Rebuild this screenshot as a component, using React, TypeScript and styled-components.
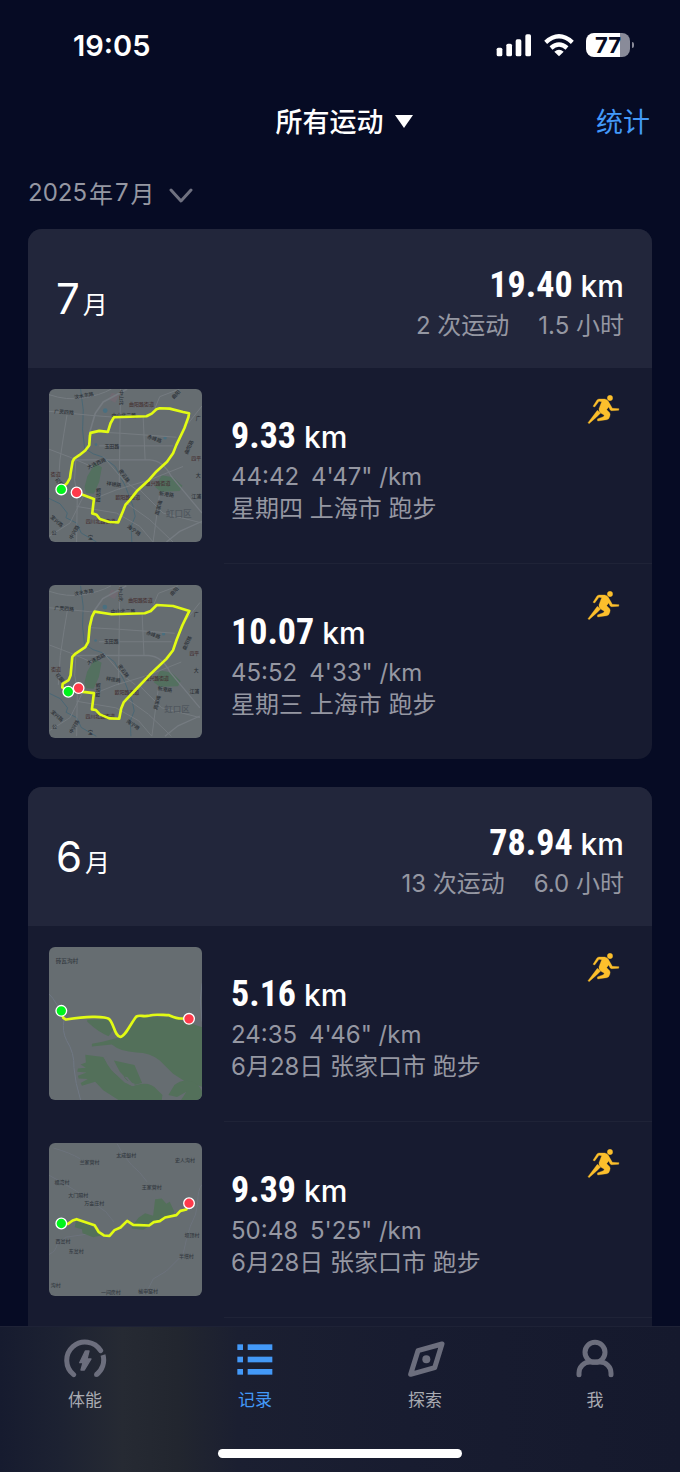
import React from 'react';
import styled, { createGlobalStyle } from 'styled-components';

const color = {
  page: '#060b24',
  header: '#22263b',
  card: '#171b30',
  line: '#1f2337',
  muted: '#9597a2',
  icon: '#6c6e7d',
  blue: '#4399f8',
  amber: '#fcbf2c',
  track: '#e2fb14',
};

const GlobalStyle = createGlobalStyle`
  * { box-sizing: border-box; }
  body {
    margin: 0;
    background: ${color.page};
    color: #fff;
    font-family: Inter, 'Noto Sans CJK SC', sans-serif;
  }
  h1, h2, p, ul { margin: 0; padding: 0; font-weight: 400; }
  ul { list-style: none; }
  button { border: 0; padding: 0; background: none; color: inherit; font: inherit; cursor: pointer; }
  svg { display: block; }
`;

const Screen = styled.div`
  display: flex;
  flex-direction: column;
  height: 100vh;
`;

/* ---------- status bar ---------- */

const StatusBar = styled.div`
  display: flex;
  align-items: center;
  justify-content: space-between;
  height: 90px;
  padding: 0 50px 0 73px;
`;

const Clock = styled.time`
  font-size: 29px;
  font-weight: 600;
`;

const StatusIcons = styled.div`
  display: flex;
  align-items: center;
  gap: 12px;
`;

const Battery = styled.span`
  position: relative;
  width: 44px;
  height: 24px;
  border-radius: 8px;
  background: linear-gradient(to right, #fff 77%, #898b99 77%);
  color: ${color.page};
  font-size: 22px;
  font-weight: 700;
  line-height: 24px;
  text-align: center;

  &::after {
    content: '';
    position: absolute;
    left: 46px;
    top: 9px;
    width: 2px;
    height: 6px;
    border-radius: 0 2px 2px 0;
    background: #898b99;
  }
`;

/* ---------- top navigation ---------- */

const NavBar = styled.header`
  display: grid;
  grid-template-columns: 1fr auto 1fr;
  align-items: center;
  height: 60px;
  padding: 0 30px 0 38px;
`;

const SportFilter = styled.button`
  grid-column: 2;
  display: flex;
  align-items: center;
  gap: 11px;
  font-size: 27px;
  font-weight: 500;

  svg { margin-top: 2px; }
`;

const StatsLink = styled.a`
  justify-self: end;
  color: ${color.blue};
  font-size: 27px;
  text-decoration: none;
`;

const MonthPicker = styled.button`
  display: flex;
  align-items: center;
  align-self: flex-start;
  gap: 2px;
  height: 79px;
  padding: 6px 28px 0;
  color: ${color.muted};
  font-size: 24px;

  svg { margin: 6px 0 0 12px; }
`;

/* ---------- month cards ---------- */

const Feed = styled.main`
  display: flex;
  flex: 1;
  flex-direction: column;
  gap: 28px;
  min-height: 0;
  padding: 0 28px;
  overflow-y: auto;
  scrollbar-width: none;
`;

const MonthCard = styled.section<{ $continues?: boolean }>`
  flex: ${p => (p.$continues ? '1 0 auto' : '0 0 auto')};
  border-radius: ${p => (p.$continues ? '14px 14px 0 0' : '14px')};
  background: ${color.card};
  overflow: hidden;
`;

const MonthHeader = styled.header`
  display: flex;
  align-items: center;
  justify-content: space-between;
  height: 139px;
  padding: 0 28px;
  background: ${color.header};
`;

const MonthName = styled.h2`
  font-size: 25px;
`;

const MonthNumber = styled.span`
  margin-right: 3px;
  font-size: 42px;
`;

const MonthTotals = styled.div`
  padding-top: 6px;
  text-align: right;
`;

const Distance = styled.p`
  font-size: 30px;
  font-weight: 500;
  line-height: 48px;
`;

const DistanceValue = styled.strong`
  font-family: 'Roboto Condensed', 'Liberation Sans Narrow', Roboto, sans-serif;
  font-size: 36px;
  font-weight: 700;
`;

const Meta = styled.p<{ $gap: number }>`
  display: flex;
  gap: ${p => p.$gap}px;
  color: ${color.muted};
  font-size: 24px;
  line-height: 32px;
`;

const TotalsMeta = styled(Meta)`
  justify-content: flex-end;
`;

const Workout = styled.li`
  display: flex;
  align-items: center;
  gap: 29px;
  padding: 21px 32px 21px 21px;
`;

const WorkoutDivider = styled.li`
  height: 1px;
  margin-left: 196px;
  background: ${color.line};
`;

const Thumb = styled.div`
  flex: none;
  width: 153px;
  height: 153px;
  border-radius: 6px;
  background: #666d71;
  overflow: hidden;

  svg { width: 100%; height: 100%; }
`;

const WorkoutText = styled.div`
  flex: 1;
  padding-top: 5px;
`;

const SportIcon = styled.div`
  align-self: flex-start;
  margin-top: 5px;
`;

/* ---------- tab bar ---------- */

const TabBar = styled.nav`
  display: grid;
  grid-template-columns: repeat(4, 1fr);
  border-top: 1px solid #1e2236;
  background: linear-gradient(to right, #161b2f 0%, #1d2232 9%, #262a33 18%, #22262f 26%, #1b1f31 35%, #181c30 60%, #15192d 100%);
`;

const Tab = styled.button<{ $active?: boolean }>`
  display: flex;
  flex-direction: column;
  align-items: center;
  gap: 9px;
  padding-top: 11px;
  color: ${p => (p.$active ? color.blue : '#a9abb2')};
  font-size: 17px;
  line-height: 26px;

  svg { color: ${p => (p.$active ? color.blue : color.icon)}; }
`;

const HomeIndicator = styled.div`
  grid-column: 1 / -1;
  justify-self: center;
  width: 36%;
  height: 9px;
  margin: 36px 0 14px;
  border-radius: 5px;
  background: #fff;
`;

/* ---------- icons ---------- */

const SignalIcon = () => (
  <svg width="36" height="24" viewBox="80 38 108 72" fill="#fff" aria-hidden="true">
    <rect x="82" y="82" width="17" height="26" rx="5" />
    <rect x="111" y="70" width="17" height="38" rx="5" />
    <rect x="139" y="57" width="17" height="51" rx="5" />
    <rect x="168" y="42" width="17" height="66" rx="5" />
  </svg>
);

const WifiIcon = () => (
  <svg width="30" height="24" viewBox="221 38 90 72" fill="none" stroke="#fff" strokeWidth="13" aria-hidden="true">
    <path d="M226 66 Q266 30 306 66" />
    <path d="M242 83 Q266 62 290 83" />
    <path d="M266 108 L252 94 Q266 83 280 94 Z" fill="#fff" stroke="none" />
  </svg>
);

const RunnerIcon = () => (
  <svg width="33" height="31" viewBox="51 42 99 93" fill={color.amber} stroke={color.amber} strokeWidth="1" strokeLinejoin="round" role="img" aria-label="跑步">
    <circle cx="120" cy="54" r="8" />
    <path d="M69 79 L81 60 Q84 57 88 57 L104 57 Q111 58 115 64 L127 85 L147 86 L146 91 L125 92 Q122 92 120 89 L116 81 L110 89 L119 98 Q122 103 119 110 Q117 118 110 119 L83 123 L82 117 L100 110 L103 106 L92 99 Q85 94 87 86 L95 65 L87 64 L74 81 Z" />
    <path d="M82 91 L92 99 L80 111 L57 131 L54 128 L73 103 Z" />
  </svg>
);

const FitnessIcon = () => (
  <svg width="44" height="40" viewBox="189 87 132 120" fill="none" stroke="currentColor" strokeWidth="15" aria-hidden="true">
    <path d="M221 197 A55 55 0 1 1 302 125" strokeLinecap="round" />
    <path d="M309 138 A55 55 0 0 1 289 197" />
    <circle cx="289" cy="197" r="7" fill="currentColor" stroke="none" />
    <path d="M256 126 L267 126 L261 150 L273 150 L253 183 L243 183 L249 161 L239 161 Z" fill="currentColor" strokeWidth="4" strokeLinejoin="round" />
  </svg>
);

const RecordsIcon = () => (
  <svg width="44" height="40" viewBox="699 87 132 120" fill="currentColor" aria-hidden="true">
    {[106, 143, 180].map(y => (
      <g key={y}>
        <rect x="712" y={y} width="17" height="17" />
        <rect x="743" y={y} width="74" height="17" />
      </g>
    ))}
  </svg>
);

const ExploreIcon = () => (
  <svg width="44" height="40" viewBox="189 87 132 120" fill="none" stroke="currentColor" strokeWidth="15" strokeLinejoin="round" aria-hidden="true">
    <path d="M306 105 L234 125 L212 196 L284 176 Z" />
    <circle cx="259" cy="151" r="12" fill="currentColor" stroke="none" />
  </svg>
);

const MeIcon = () => (
  <svg width="44" height="40" viewBox="699 87 132 120" fill="none" stroke="currentColor" strokeWidth="15" strokeLinecap="round" aria-hidden="true">
    <circle cx="765" cy="130" r="30" />
    <path d="M717 197 V192 A33 33 0 0 1 750 159 H780 A33 33 0 0 1 813 192 V197" />
  </svg>
);

/* ---------- route maps ---------- */

type Point = [number, number];

const MapLabel = ({ x, y, r = 0, size = 15, fill = '#2b3036', children }: { x: number; y: number; r?: number; size?: number; fill?: string; children: string }) => (
  <text x={x} y={y + 5} fontSize={size} fontWeight={500} fill={fill} textAnchor="middle" transform={`rotate(${r} ${x} ${y})`}>
    {children}
  </text>
);

const Route = ({ d, start, end }: { d: string; start: Point; end: Point }) => (
  <g>
    <path d={d} fill="none" stroke={color.track} strokeWidth="8" strokeLinejoin="round" strokeLinecap="round" />
    <circle cx={start[0]} cy={start[1]} r="16" fill="#00f41c" stroke="#fff" strokeWidth="4" />
    <circle cx={end[0]} cy={end[1]} r="16" fill="#ff3a4b" stroke="#fff" strokeWidth="4" />
  </g>
);

const CityStreets = () => (
  <g>
    <path d="M165 250 L186 262 L178 306 L162 342 L138 340 L134 322 L142 290 Z" fill="#53705f" />
    <path d="M366 286 L400 292 L428 318 L420 334 L364 336 L346 322 Z" fill="#53705f" />
    <path d="M216 38 L238 46 L226 68 L206 58 Z" fill="#706a72" />
    <g fill="none" stroke="#496775" strokeWidth="3">
      <path d="M122 27 L130 90 L128 150 L134 205 L160 222 L190 232 L226 260 L256 318 L280 380 L286 410 L274 440 L276 487" />
      <path d="M27 356 L60 372 L82 400 L78 414 L110 430 L124 460 L170 487" />
    </g>
    <g fill="#496f80">
      <circle cx="196" cy="92" r="7" />
      <circle cx="168" cy="194" r="4" />
      <circle cx="376" cy="174" r="5" />
    </g>
    <g fill="none" stroke="#757b81" strokeWidth="3">
      <path d="M27 44 Q80 62 130 54 T215 27" />
      <path d="M262 27 L190 66 L166 100 L148 162" strokeWidth="5" />
      <path d="M27 94 L150 106 L226 112" />
      <path d="M82 100 L72 160 L60 240 L54 330" />
      <path d="M242 27 L238 330" />
      <path d="M27 208 L90 232 L160 262" />
      <path d="M108 234 L104 300 L112 350 L110 487" />
      <path d="M98 240 H330 Q370 242 395 290 L487 400" strokeWidth="4" />
      <path d="M152 155 L242 160 L410 172" />
      <path d="M178 198 H400" />
      <path d="M310 108 L316 240" />
      <path d="M345 86 L360 50 L420 27" />
      <path d="M487 78 L446 130" />
      <path d="M160 358 L230 330 L330 300 L430 260" />
      <path d="M110 380 L230 400 L300 440 L340 487" />
      <path d="M27 470 L90 430 L130 350" />
      <path d="M260 370 L330 420 L400 487" />
      <path d="M300 330 L370 400 L487 430" />
      <path d="M380 487 L420 455 L487 425" strokeWidth="4" />
      <path d="M190 230 L250 300 L290 330" />
      <path d="M360 340 L340 487" />
    </g>
    <MapLabel x={132} y={47} r={-10}>汶水东路</MapLabel>
    <MapLabel x={72} y={97} r={4}>广灵四路</MapLabel>
    <MapLabel x={244} y={53} r={88}>中山北</MapLabel>
    <MapLabel x={305} y={72} fill="#463436">曲阳路街道</MapLabel>
    <MapLabel x={409} y={44} r={-45}>曲阳</MapLabel>
    <MapLabel x={252} y={106}>中山北二路</MapLabel>
    <MapLabel x={344} y={177} r={20}>赤峰路</MapLabel>
    <MapLabel x={216} y={198}>玉田路</MapLabel>
    <MapLabel x={448} y={202} r={-65}>曲阳路</MapLabel>
    <MapLabel x={476} y={115}>广</MapLabel>
    <MapLabel x={170} y={251} r={-25}>大连西路</MapLabel>
    <MapLabel x={253} y={288} r={55}>密云路</MapLabel>
    <MapLabel x={222} y={314} r={8}>祥德路</MapLabel>
    <MapLabel x={176} y={346} r={-88}>四达路</MapLabel>
    <MapLabel x={470} y={235} fill="#463436">四平</MapLabel>
    <MapLabel x={47} y={283} fill="#463436">街道</MapLabel>
    <MapLabel x={58} y={308} r={50}>花园</MapLabel>
    <MapLabel x={355} y={311} fill="#463436">嘉兴路街道</MapLabel>
    <MapLabel x={380} y={344} r={8}>新港路</MapLabel>
    <MapLabel x={264} y={354} fill="#463436">欧阳路街道</MapLabel>
    <MapLabel x={470} y={351}>江浦</MapLabel>
    <MapLabel x={476} y={286}>大</MapLabel>
    <MapLabel x={357} y={384} r={-75}>周家嘴</MapLabel>
    <MapLabel x={417} y={408} size={26} fill="#50575e">虹口区</MapLabel>
    <MapLabel x={182} y={425} fill="#463436">四川北路街道</MapLabel>
    <MapLabel x={50} y={425} r={42}>宝兴路</MapLabel>
    <MapLabel x={282} y={452} r={35}>海宁路</MapLabel>
    <MapLabel x={103} y={458} r={-60}>中兴路</MapLabel>
    <MapLabel x={42} y={458}>公</MapLabel>
    <MapLabel x={152} y={474}>宝</MapLabel>
  </g>
);

const ThursdayMap = () => (
  <svg viewBox="27 27 460 460" role="img" aria-label="路线">
    <CityStreets />
    <Route
      d="M64 328 L82 309 L90 295 L92 280 L98 245 L103 236 L118 226 L136 212 L148 196 L150 168 L152 159 L178 153 L204 156 L212 130 L222 112 L320 109 L336 101 L350 88 L360 85 L390 86 L430 96 L448 100 L446 112 L434 145 L410 195 L400 220 L382 246 L350 275 L325 303 L293 332 L270 361 L257 375 L249 395 L235 428 L208 427 L180 418 L170 405 L157 401 L162 358 L110 338"
      start={[64, 329]}
      end={[110, 338]}
    />
  </svg>
);

const WednesdayMap = () => (
  <svg viewBox="27 24 460 460" role="img" aria-label="路线">
    <g transform="translate(2 0) scale(.983)">
      <CityStreets />
    </g>
    <Route
      d="M86 345 L67 332 L68 321 L86 310 L92 295 L97 240 L107 230 L136 211 L145 195 L149 150 L156 120 L164 104 L215 112 L315 109 L333 102 L351 84 L400 87 L449 102 L428 145 L411 188 L400 220 L380 246 L330 294 L293 333 L252 376 L244 395 L238 426 L208 425 L180 413 L168 400 L156 398 L162 349 L116 344 L116 335"
      start={[85, 345]}
      end={[116, 334]}
    />
  </svg>
);

const ValleyMap = () => (
  <svg viewBox="27 21 460 460" role="img" aria-label="路线">
    <path d="M27 162 Q50 184 72 240 Q66 275 80 302 Q104 340 102 384 Q106 430 122 481 M487 130 L482 180 L487 245" fill="none" stroke="#6f7784" strokeWidth="3" />
    <g fill="#53705a">
      <path d="M142 240 L206 238 L222 268 L206 289 Q176 278 142 246 Z" />
      <path d="M240 292 L262 270 L290 232 L400 232 L487 262 V441 L440 428 L400 402 L360 362 Q330 338 290 338 Q240 335 216 314 L156 320 V312 L188 306 Z" />
      <path d="M136 345 L190 352 L220 396 L256 430 L266 424 L240 396 L222 362 L284 376 L307 430 L282 436 L262 412 L250 410 L276 440 L290 436 Q330 424 352 450 L368 466 L366 481 H236 L190 452 L166 426 L126 438 L122 430 L144 418 L116 416 L114 408 L140 398 L112 396 L114 386 L138 384 L122 374 L138 368 Z" />
      <path d="M386 466 L404 436 Q424 420 446 424 Q476 428 487 454 V481 H424 L440 456 L412 472 Z" />
    </g>
    <path d="M196 352 Q214 396 246 410 Q256 430 284 436" fill="none" stroke="#666d71" strokeWidth="8" />
    <MapLabel x={81} y={64} size={17} fill="#343a41">砖瓦沟村</MapLabel>
    <Route
      d="M64 213 L70 234 L78 239 Q130 230 165 231 Q200 232 207 237 C222 248 224 290 241 291 C256 292 276 244 290 230 C300 224 310 232 330 227 C345 222 370 226 388 226 C402 232 410 236 424 236 L448 237"
      start={[64, 213]}
      end={[448, 237]}
    />
  </svg>
);

const villages: [number, number, string][] = [
  [149, 82, '兰家营村'], [259, 62, '太成魁村'], [436, 76, '史人沟村'], [336, 158, '王家营村'],
  [66, 144, '福湾村'], [115, 181, '大门隔村'], [163, 206, '万金庄村'], [69, 322, '西岔村'],
  [109, 350, '东岔村'], [457, 302, '坝顶村'], [440, 366, '半塔村'], [47, 452, '沟村'],
  [213, 473, '一间房村'], [325, 470, '榆申窑村'],
];

const VillagesMap = () => (
  <svg viewBox="27 25 460 460" role="img" aria-label="路线">
    <path d="M40 40 Q90 54 120 72 M232 27 Q246 60 276 92 Q300 110 322 142 M27 122 L60 140 L110 170 L160 205 L198 232 L222 262 M27 360 Q50 350 52 326 L78 308 L150 298 M487 150 Q474 165 474 205 Q472 240 452 275 Q440 310 430 360 L380 410 L340 434 L326 462" fill="none" stroke="#6f7682" strokeWidth="2" />
    <g fill="#53705a">
      <path d="M108 260 L150 270 L186 302 L160 308 L128 296 L126 284 L104 278 Z" />
      <path d="M276 276 L296 250 L316 236 L340 244 L346 194 L366 192 L380 208 L390 202 L404 232 L396 246 L340 268 L310 286 L276 282 Z" />
    </g>
    {villages.map(([x, y, name]) => (
      <MapLabel key={name} x={x} y={y} fill="#343a41">{name}</MapLabel>
    ))}
    <Route
      d="M64 267 L84 268 L98 258 L110 254 L164 272 L176 292 L192 303 L209 304 L224 287 L242 279 L262 259 L280 271 L328 273 L342 263 L360 260 L376 249 L410 242 L422 229 L440 225 L448 206"
      start={[64, 267]}
      end={[448, 206]}
    />
  </svg>
);

/* ---------- data ---------- */

type WorkoutData = { km: string; time: string; pace: string; note: string; Map: () => React.JSX.Element };
type MonthData = { month: number; km: string; count: number; hours: string; continues?: boolean; workouts: WorkoutData[] };

const months: MonthData[] = [
  {
    month: 7, km: '19.40', count: 2, hours: '1.5',
    workouts: [
      { km: '9.33', time: '44:42', pace: `4'47" /km`, note: '星期四 上海市 跑步', Map: ThursdayMap },
      { km: '10.07', time: '45:52', pace: `4'33" /km`, note: '星期三 上海市 跑步', Map: WednesdayMap },
    ],
  },
  {
    month: 6, km: '78.94', count: 13, hours: '6.0', continues: true,
    workouts: [
      { km: '5.16', time: '24:35', pace: `4'46" /km`, note: '6月28日 张家口市 跑步', Map: ValleyMap },
      { km: '9.39', time: '50:48', pace: `5'25" /km`, note: '6月28日 张家口市 跑步', Map: VillagesMap },
    ],
  },
];

const tabs = [
  { name: '体能', Icon: FitnessIcon },
  { name: '记录', Icon: RecordsIcon, active: true },
  { name: '探索', Icon: ExploreIcon },
  { name: '我', Icon: MeIcon },
];

export default function App() {
  return (
    <>
      <GlobalStyle />
      <Screen>
        <StatusBar>
          <Clock>19:05</Clock>
          <StatusIcons>
            <SignalIcon />
            <WifiIcon />
            <Battery>77</Battery>
          </StatusIcons>
        </StatusBar>

        <NavBar>
          <SportFilter>
            所有运动
            <svg width="18" height="13" viewBox="0 0 18 13" fill="#fff" aria-hidden="true">
              <path d="M0 0 H18 L9 13 Z" />
            </svg>
          </SportFilter>
          <StatsLink href="#stats">统计</StatsLink>
        </NavBar>

        <MonthPicker>
          <span>2025</span>
          <span>年</span>
          <span>7</span>
          <span>月</span>
          <svg width="24" height="16" viewBox="0 0 24 16" fill="none" stroke="#6f7180" strokeWidth="3" strokeLinecap="round" strokeLinejoin="round" aria-hidden="true">
            <path d="M2 2 L12 13 L22 2" />
          </svg>
        </MonthPicker>

        <Feed>
          {months.map(m => (
            <MonthCard key={m.month} $continues={m.continues}>
              <MonthHeader>
                <MonthName>
                  <MonthNumber>{m.month}</MonthNumber>月
                </MonthName>
                <MonthTotals>
                  <Distance><DistanceValue>{m.km}</DistanceValue> km</Distance>
                  <TotalsMeta $gap={29}>
                    <span>{m.count} 次运动</span>
                    <span>{m.hours} 小时</span>
                  </TotalsMeta>
                </MonthTotals>
              </MonthHeader>
              <ul>
                {m.workouts.map((w, i) => (
                  <React.Fragment key={w.km}>
                    <Workout>
                      <Thumb><w.Map /></Thumb>
                      <WorkoutText>
                        <Distance><DistanceValue>{w.km}</DistanceValue> km</Distance>
                        <Meta $gap={12}>
                          <span>{w.time}</span>
                          <span>{w.pace}</span>
                        </Meta>
                        <Meta $gap={0}>{w.note}</Meta>
                      </WorkoutText>
                      <SportIcon><RunnerIcon /></SportIcon>
                    </Workout>
                    {(m.continues || i < m.workouts.length - 1) && <WorkoutDivider role="separator" />}
                  </React.Fragment>
                ))}
              </ul>
            </MonthCard>
          ))}
        </Feed>

        <TabBar>
          {tabs.map(({ name, Icon, active }) => (
            <Tab key={name} $active={active} aria-current={active ? 'page' : undefined}>
              <Icon />
              {name}
            </Tab>
          ))}
          <HomeIndicator />
        </TabBar>
      </Screen>
    </>
  );
}
